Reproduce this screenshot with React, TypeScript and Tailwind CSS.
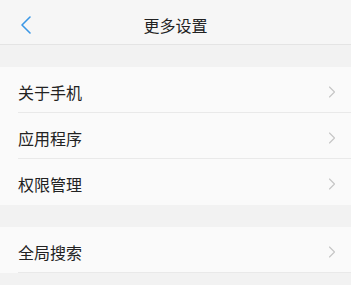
import { ChevronLeft, ChevronRight } from "lucide-react";

function Row({ label, last }: { label: string; last: boolean }) {
  return (
    <div className="h-[46px] pl-[18px] bg-[#fafafa]">
      <div
        className={
          "h-full flex items-center pr-[9px] pt-[4px] " +
          (last ? "" : "border-b border-[#e9e9e9]")
        }
      >
        <span className="flex-1 text-[16px] text-[#222]">{label}</span>
        <ChevronRight size={20} strokeWidth={1.3} className="text-[#c6c6c6]" />
      </div>
    </div>
  );
}

export default function App() {
  return (
    <div
      className="w-[351px] h-[285px] overflow-hidden bg-[#f2f2f2]"
      style={{ fontFamily: '"Noto Sans CJK SC", "Noto Sans", sans-serif' }}
    >
      <div className="h-[45px] bg-[#f6f6f6] border-b border-[#e4e4e4] relative flex items-center justify-center pt-[5px]">
        <ChevronLeft
          size={32}
          strokeWidth={1.2}
          className="absolute left-[10px] top-[9px] text-[#3a97e6]"
        />
        <span className="text-[16px] text-[#222]">更多设置</span>
      </div>
      <div className="h-[22px]" />
      <Row label="关于手机" last={false} />
      <Row label="应用程序" last={false} />
      <Row label="权限管理" last={true} />
      <div className="h-[22px]" />
      <Row label="全局搜索" last={false} />
    </div>
  );
}
